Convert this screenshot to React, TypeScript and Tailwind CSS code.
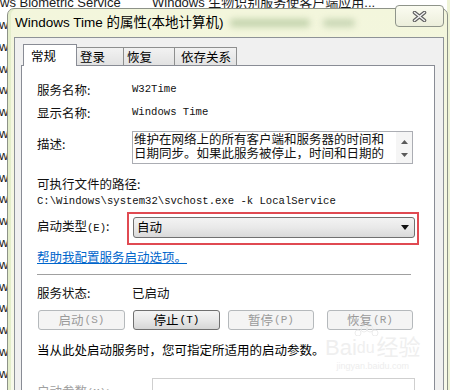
import React from "react";

const cjk = "font-['Noto_Sans_CJK_SC',sans-serif]";
const mono = "font-['Liberation_Mono','Noto_Sans_CJK_SC',monospace]";

function Btn({ label, k, enabled, cls }: { label: string; k: string; enabled?: boolean; cls: string }) {
  return (
    <div
      className={
        "h-[20px] rounded-[3px] border flex items-center justify-center text-[12.5px] leading-none " +
        cls +
        (enabled
          ? " border-[#707070] bg-gradient-to-b from-[#f4f4f4] via-[#e8e8e8] to-[#d6d6d6] text-black"
          : " border-[#b5b9bc] bg-[#f4f4f4] text-[#9a9a9a]")
      }
    >
      <span>{label}</span>
      <span className={mono + " text-[11px] ml-[1px]"}>({k})</span>
    </div>
  );
}

export default function App() {
  const bgRows = Array.from({ length: 18 });
  return (
    <div className={"relative w-[450px] h-[390px] overflow-hidden bg-white text-black " + cjk}>
      {/* background list behind the dialog */}
      <div className="flex flex-col -mt-[8px] font-['Liberation_Sans','Noto_Sans_CJK_SC',sans-serif] text-[13px] text-[#1a1a1a]">
        <div className="h-[21.8px] flex items-center whitespace-nowrap">
          <span className="w-[152px]">ws Biometric Service</span>
          <span>Windows 生物识别服务使客户端应用...</span>
        </div>
        {bgRows.map((_, i) => (
          <div key={i} className="h-[21.8px] flex items-center">
            <span className="-ml-[1px]">w</span>
          </div>
        ))}
      </div>
      <div className="absolute right-0 top-0 w-[3px] h-full bg-[#eef3d6]" />

      {/* dialog window */}
      <div className="absolute left-[7px] top-[8px] w-[441px] h-[400px] rounded-t-[7px] border border-[#8d9288] bg-gradient-to-b from-[#f3f6dc] to-[#f7f9ea] shadow-[inset_3px_0_0_#e4eecb] flex flex-col">
        <div className="relative h-[28px] flex items-center pl-[7px] shrink-0">
          <span className="font-['Liberation_Sans','Noto_Sans_CJK_SC',sans-serif] text-[13.5px] text-black whitespace-nowrap">
            Windows Time 的属性(本地计算机)
          </span>
          <div className="ml-[6px] w-[80px] h-[8px] rounded-full bg-[#c3d3ad] blur-[3px]" />
          <div className="ml-[13px] w-[32px] h-[8px] rounded-full bg-[#c8d6b4] blur-[3px]" />
          <div className="absolute right-[3px] -top-[4px] w-[49px] h-[22px] rounded-[4px] border border-[#8f948a] bg-gradient-to-b from-[#fbfcf1] to-[#eceedb] flex items-center justify-center">
            <svg width="15" height="11" viewBox="0 0 15 11">
              <path d="M2.5 1.5 L12.5 9.5 M12.5 1.5 L2.5 9.5" stroke="#5e5e5e" strokeWidth="3.6" strokeLinecap="round" fill="none" />
              <path d="M2.5 1.5 L12.5 9.5 M12.5 1.5 L2.5 9.5" stroke="#f4f4f4" strokeWidth="1.5" strokeLinecap="round" fill="none" />
            </svg>
          </div>
        </div>

        {/* client area */}
        <div className="flex-1 ml-[6px] mr-[3px] border border-[#8e9297] bg-[#f0f0f0] pl-[6px] pr-[8px] pt-[6px] flex flex-col">
          {/* tabs */}
          <div className="relative z-10 flex items-end h-[22px] -mb-px pl-[2px] text-[12.5px]">
            <div className="h-[22px] w-[54px] bg-white border-x border-t border-[#898c95] pl-[7px] pt-[1px] leading-[20px]">常规</div>
            <div className="mb-px h-[18px] w-[47px] border-t border-r border-[#8e8f8f] bg-gradient-to-b from-[#f2f2f2] to-[#e2e2e2] pl-[3px] leading-[18px]">登录</div>
            <div className="mb-px h-[18px] w-[51px] border-t border-r border-[#8e8f8f] bg-gradient-to-b from-[#f2f2f2] to-[#e2e2e2] pl-[3px] leading-[18px]">恢复</div>
            <div className="mb-px h-[18px] w-[62px] border-t border-r border-[#8e8f8f] bg-gradient-to-b from-[#f2f2f2] to-[#e2e2e2] pl-[6px] leading-[18px]">依存关系</div>
          </div>

          {/* tab panel */}
          <div className="relative flex-1 bg-white border border-[#898c95] pl-[15px] pt-[14px] flex flex-col text-[12.5px] text-[#111]">
            <div className="h-[20px] flex items-center">
              <span className="w-[95px]">服务名称:</span>
              <span className={mono + " text-[10.6px]"}>W32Time</span>
            </div>
            <div className="mt-[3px] h-[20px] flex items-center">
              <span className="w-[95px]">显示名称:</span>
              <span className={mono + " text-[10.6px]"}>Windows Time</span>
            </div>
            <div className="mt-[8px] h-[33px] flex items-start">
              <span className="w-[95px] mt-[3px] leading-[20px]">描述:</span>
              <div className="w-[281px] h-[33px] border border-[#abadb3] flex">
                <div className="flex-1 pl-[1px] leading-[13.5px] text-[12.5px] whitespace-nowrap overflow-hidden">
                  <div>维护在网络上的所有客户端和服务器的时间和</div>
                  <div>日期同步。如果此服务被停止，时间和日期的</div>
                </div>
                <div className="w-[16px] bg-[#f5f5f5] flex flex-col items-center justify-between pt-[8px] pb-[6px]">
                  <svg width="7" height="4" viewBox="0 0 7 4"><path d="M0 4 L3.5 0 L7 4 Z" fill="#5a5a5a" /></svg>
                  <svg width="7" height="4" viewBox="0 0 7 4"><path d="M0 0 L7 0 L3.5 4 Z" fill="#5a5a5a" /></svg>
                </div>
              </div>
            </div>
            <div className="mt-[10px] h-[20px] flex items-center">可执行文件的路径:</div>
            <div className={mono + " h-[14px] leading-[14px] text-[10.6px] whitespace-nowrap"}>
              C:\Windows\system32\svchost.exe -k LocalService
            </div>
            <div className="mt-[4px] h-[33px] flex items-center">
              <span className="w-[90px] pb-[3px]">
                启动类型<span className={mono + " text-[10.6px]"}>(E)</span>:
              </span>
              <div className="w-[292px] h-[33px] border-2 border-[#e04a52] pl-[4px] pr-[2px] pt-[3px] pb-[5px]">
                <div className="h-full rounded-[3px] border border-[#707070] bg-gradient-to-b from-[#f3f3f3] via-[#e9e9e9] to-[#d9d9d9] flex items-center pl-[3px] pr-[5px] text-[12.5px] text-black">
                  <span className="flex-1">自动</span>
                  <svg width="8" height="5" viewBox="0 0 8 5"><path d="M0 0 L8 0 L4 5 Z" fill="#111" /></svg>
                </div>
              </div>
            </div>
            <div className="mt-[5px] h-[14px] leading-[14px]">
              <span className="text-[#0066cc] underline">帮助我配置服务启动选项。</span>
            </div>
            <div className="mt-[10px] h-px w-[374px] bg-[#a0a0a0]" />
            <div className="mt-[8px] h-[20px] flex items-center">
              <span className="w-[95px]">服务状态:</span>
              <span>已启动</span>
            </div>
            <div className="mt-[7px] flex">
              <Btn label="启动" k="S" cls="ml-[1px] w-[87px]" />
              <Btn label="停止" k="T" enabled cls="ml-[8px] w-[87px]" />
              <Btn label="暂停" k="P" cls="ml-[8px] w-[86px]" />
              <Btn label="恢复" k="R" cls="ml-[13px] w-[86px]" />
            </div>
            <div className="mt-[12px] h-[16px] leading-[16px] text-black">当从此处启动服务时，您可指定所适用的启动参数。</div>
            <div className="mt-[20px] flex items-start">
              <span className="w-[115px] mt-[4px] text-[#a0a0a0]">
                启动参数<span className={mono + " text-[10.6px]"}>(M)</span>:
              </span>
              <div className="w-[263px] h-[30px] border border-[#cfcfcf] bg-white" />
            </div>

            {/* watermark */}
            <div className="absolute left-[303px] top-[270px] flex flex-col items-center pointer-events-none">
              <div className="flex items-end font-['Liberation_Sans','Noto_Sans_CJK_SC',sans-serif] text-[22px] leading-[24px] text-[#efefef]">
                <span>Bai</span>
                <span className="relative flex flex-col items-center">
                  <svg width="26" height="10" viewBox="0 0 26 10" className="absolute -top-[10px]">
                    <circle cx="5" cy="7" r="3" fill="none" stroke="#ececec" />
                    <circle cx="11" cy="3" r="3" fill="none" stroke="#ececec" />
                    <circle cx="17" cy="3" r="3" fill="none" stroke="#ececec" />
                    <circle cx="22" cy="7" r="3" fill="none" stroke="#ececec" />
                  </svg>
                  <span className="text-[16px]">du</span>
                </span>
                <span className="ml-[2px]">经验</span>
              </div>
              <div className="font-['Liberation_Sans',sans-serif] text-[9px] leading-[12px] text-[#ededed]">jingyan.baidu.com</div>
            </div>
          </div>
        </div>
      </div>
    </div>
  );
}
